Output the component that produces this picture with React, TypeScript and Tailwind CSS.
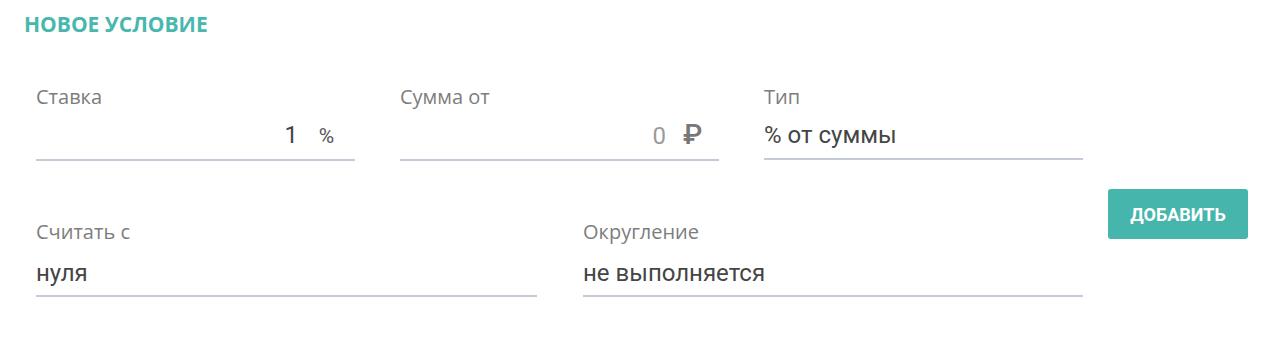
import React from 'react';

function Field({ label, value, suffix, placeholder, width, align = 'left', valuePad = 'pt-[12px] pb-[9px]' }: {
    label: string;
    value: string;
    suffix?: React.ReactNode;
    placeholder?: boolean;
    width: string;
    align?: 'left' | 'right';
    valuePad?: string;
}) {
    return (
        <div className={`flex flex-col ${width}`}>
            <div className="text-[20px] leading-[24px] text-[#7d7d7d] font-['Open_Sans',sans-serif]">{label}</div>
            <div className={`flex items-baseline border-b-2 border-[#c4cbd6] font-['Roboto',sans-serif] ${valuePad}`}>
                <div className={`flex-1 text-[24px] leading-[28px] ${align === 'right' ? 'text-right' : 'text-left'} ${placeholder ? 'text-[#9a9a9a]' : 'text-[#454545]'}`}>
                    {value}
                </div>
                {suffix}
            </div>
        </div>
    );
}

export default function App() {
    return (
        <div className="w-[1278px] h-[339px] bg-white relative">
            <div className="pl-[24px] pt-[10px] text-[21px] leading-[28px] font-bold text-[#48b7ad] font-['Open_Sans',sans-serif]">
                НОВОЕ УСЛОВИЕ
            </div>

            <div className="flex pl-[36px] mt-[47px] gap-[45px]">
                <Field
                    label="Ставка"
                    value="1"
                    align="right"
                    width="w-[319px]"
                    suffix={<span className="w-[57px] text-center text-[21px] leading-[28px] text-[#555]">%</span>}
                />
                <Field
                    label="Сумма от"
                    value="0"
                    placeholder
                    align="right"
                    width="w-[319px]"
                    suffix={<span className="w-[53px] text-center text-[28px] leading-[28px] font-medium text-[#777]">₽</span>}
                />
                <Field label="Тип" value="% от суммы" width="w-[319px]" />
            </div>

            <div className="flex pl-[36px] mt-[59px] gap-[46px] items-start">
                <Field label="Считать с" value="нуля" width="w-[501px]" valuePad="pt-[15px] pb-[8px]" />
                <Field label="Округление" value="не выполняется" width="w-[500px]" valuePad="pt-[15px] pb-[8px]" />
            </div>

            <button className="absolute left-[1108px] top-[189px] w-[140px] h-[50px] rounded-[3px] bg-[#46b6ac] text-white text-[18px] font-bold font-['Roboto',sans-serif]">
                ДОБАВИТЬ
            </button>
        </div>
    );
}
